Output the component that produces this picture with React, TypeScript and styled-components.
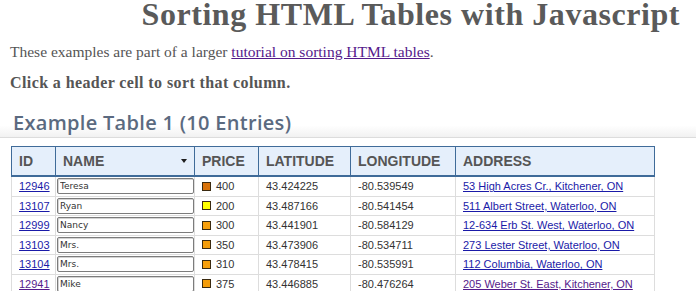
import React from "react";
import styled, { createGlobalStyle } from "styled-components";

const GlobalStyle = createGlobalStyle`
  html, body { margin: 0; padding: 0; background: #ffffff; }
  body { font-family: "Liberation Serif", serif; color: #555555; overflow: hidden; }
`;

const Page = styled.div`
  width: 696px;
  height: 291px;
  overflow: hidden;
`;

const Title = styled.h1`
  margin: 0;
  padding-right: 16px;
  text-align: right;
  font-family: "Liberation Serif", serif;
  font-weight: bold;
  font-size: 32px;
  letter-spacing: 0.55px;
  line-height: 28px;
  color: #5a5a5a;
`;

const Para = styled.p<{ $bold?: boolean; $top: number }>`
  margin: ${(p) => p.$top}px 0 0 0;
  padding-left: 10px;
  font-family: "Liberation Serif", serif;
  font-size: ${(p) => (p.$bold ? "16px" : "15.5px")};
  letter-spacing: ${(p) => (p.$bold ? "0.4px" : "0")};
  line-height: 18px;
  font-weight: ${(p) => (p.$bold ? "bold" : "normal")};
  color: #555555;
`;

const TextLink = styled.a`
  color: #551a8b;
  text-decoration: underline;
`;

const Heading = styled.h2`
  margin: 19px 0 0 0;
  padding: 0 0 2px 13px;
  font-family: "Open Sans", sans-serif;
  font-weight: 600;
  font-size: 20px;
  letter-spacing: 0.3px;
  line-height: 24px;
  color: #5b6a80;
  background: linear-gradient(to bottom, #ffffff 0%, #ffffff 55%, #f1f1f1 100%);
  border-bottom: 1px solid #dcdcdc;
`;

const Table = styled.table`
  margin: 8px 0 0 11px;
  width: 644px;
  table-layout: fixed;
  border-collapse: separate;
  border-spacing: 0;
`;

const Th = styled.th<{ $w: number; $first?: boolean }>`
  box-sizing: border-box;
  width: ${(p) => p.$w}px;
  padding: 0 7px;
  height: 31px;
  line-height: 28px;
  text-align: left;
  font-family: "Liberation Sans", Arial, sans-serif;
  font-size: 14px;
  font-weight: bold;
  color: #555555;
  background: #e5effb;
  border-top: 1px solid #3f6b99;
  border-right: 1px solid #3f6b99;
  border-bottom: 2px solid #3f6b99;
  border-left: ${(p) => (p.$first ? "1px solid #3f6b99" : "none")};
  white-space: nowrap;
  cursor: pointer;
`;

const HeadInner = styled.div`
  display: flex;
  align-items: center;
  justify-content: space-between;
`;

const SortArrow = styled.span`
  display: block;
  width: 0;
  height: 0;
  border-left: 3.5px solid transparent;
  border-right: 3.5px solid transparent;
  border-top: 4px solid #1e1e1e;
`;

const Td = styled.td<{ $first?: boolean; $tight?: boolean }>`
  box-sizing: border-box;
  padding: ${(p) => (p.$tight ? "0 0 0 1px" : "0 7px")};
  height: 19px;
  line-height: 18px;
  font-family: "Liberation Sans", Arial, sans-serif;
  font-size: 11px;
  color: #333333;
  border-right: 1px solid #dddddd;
  border-bottom: 1px solid #dddddd;
  border-left: ${(p) => (p.$first ? "1px solid #dddddd" : "none")};
  white-space: nowrap;
  overflow: hidden;
  vertical-align: middle;
`;

const CellLink = styled.a<{ $visited?: boolean }>`
  color: ${(p) => (p.$visited ? "#551a8b" : "#1a1aa8")};
  text-decoration: underline;
`;

const NameInput = styled.input`
  display: block;
  box-sizing: border-box;
  width: 137px;
  height: 16px;
  margin: 0;
  padding: 0 2px;
  border: 1px solid #7c7c7c;
  border-radius: 2px;
  box-shadow: inset 1px 1px 0 #d4d4d4;
  background: #ffffff;
  font-family: "DejaVu Sans", sans-serif;
  font-size: 9px;
  color: #333333;
  outline: none;
`;

const PriceWrap = styled.span`
  display: inline-flex;
  align-items: center;
  gap: 5px;
`;

const Swatch = styled.span<{ $color: string }>`
  display: inline-block;
  box-sizing: border-box;
  width: 9px;
  height: 9px;
  border: 1px solid #3a2a10;
  background: ${(p) => p.$color};
`;

type Row = {
  id: string;
  name: string;
  price: number;
  color: string;
  lat: string;
  lng: string;
  address: string;
  visited?: boolean;
};

const rows: Row[] = [
  { id: "12946", name: "Teresa", price: 400, color: "#d9730a", lat: "43.424225", lng: "-80.539549", address: "53 High Acres Cr., Kitchener, ON" },
  { id: "13107", name: "Ryan", price: 200, color: "#ffff00", lat: "43.487166", lng: "-80.541454", address: "511 Albert Street, Waterloo, ON" },
  { id: "12999", name: "Nancy", price: 300, color: "#f9a10c", lat: "43.441901", lng: "-80.584129", address: "12-634 Erb St. West, Waterloo, ON" },
  { id: "13103", name: "Mrs.", price: 350, color: "#f49d0a", lat: "43.473906", lng: "-80.534711", address: "273 Lester Street, Waterloo, ON" },
  { id: "13104", name: "Mrs.", price: 310, color: "#f9a10c", lat: "43.478415", lng: "-80.535991", address: "112 Columbia, Waterloo, ON" },
  { id: "12941", name: "Mike", price: 375, color: "#f49d0a", lat: "43.446885", lng: "-80.476264", address: "205 Weber St. East, Kitchener, ON", visited: true },
];

const columns = [
  { key: "id", label: "ID", w: 45 },
  { key: "name", label: "NAME", w: 139 },
  { key: "price", label: "PRICE", w: 64 },
  { key: "lat", label: "LATITUDE", w: 92 },
  { key: "lng", label: "LONGITUDE", w: 105 },
  { key: "address", label: "ADDRESS", w: 199 },
];

export default function App() {
  return (
    <Page>
      <GlobalStyle />
      <Title>Sorting HTML Tables with Javascript</Title>
      <Para $top={15}>
        These examples are part of a larger <TextLink href="#">tutorial on sorting HTML tables</TextLink>.
      </Para>
      <Para $top={13} $bold>
        Click a header cell to sort that column.
      </Para>
      <Heading>Example Table 1 (10 Entries)</Heading>
      <Table>
        <thead>
          <tr>
            {columns.map((c, i) => (
              <Th key={c.key} $w={c.w} $first={i === 0}>
                {c.key === "name" ? (
                  <HeadInner>
                    {c.label}
                    <SortArrow />
                  </HeadInner>
                ) : (
                  c.label
                )}
              </Th>
            ))}
          </tr>
        </thead>
        <tbody>
          {rows.map((r) => (
            <tr key={r.id}>
              <Td $first>
                <CellLink href="#" $visited={r.visited}>{r.id}</CellLink>
              </Td>
              <Td $tight>
                <NameInput defaultValue={r.name} />
              </Td>
              <Td>
                <PriceWrap>
                  <Swatch $color={r.color} />
                  {r.price}
                </PriceWrap>
              </Td>
              <Td>{r.lat}</Td>
              <Td>{r.lng}</Td>
              <Td>
                <CellLink href="#" $visited={r.visited}>{r.address}</CellLink>
              </Td>
            </tr>
          ))}
        </tbody>
      </Table>
    </Page>
  );
}
